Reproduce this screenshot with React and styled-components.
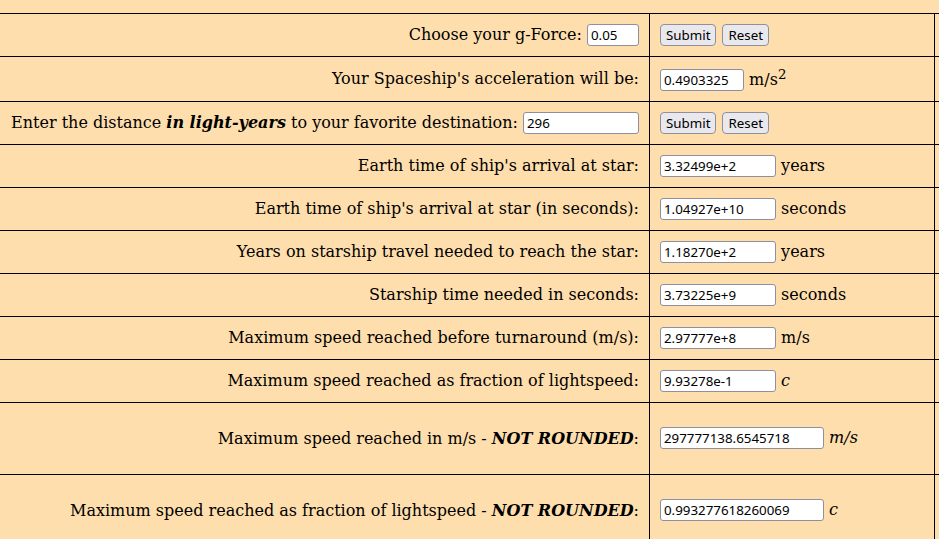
import React from 'react';
import styled, { createGlobalStyle } from 'styled-components';

const Global = createGlobalStyle`
  html, body { margin: 0; padding: 0; background: #ffdead; overflow: hidden; }
  body { font-family: "DejaVu Serif", serif; font-size: 16px; color: #000; }
`;

const Page = styled.div`
  padding-top: 13px;
  width: 939px;
  overflow: hidden;
`;

const Table = styled.div`
  width: 1100px;
  border-top: 1px solid #000;
`;

const Row = styled.div`
  display: grid;
  grid-template-columns: 650px 285px 1fr;
  height: ${(p) => p.$h || 43}px;
  box-sizing: border-box;
  border-bottom: 1px solid #000;
`;

const Cell = styled.div`
  box-sizing: border-box;
  border-right: ${(p) => (p.$last ? 'none' : '1px solid #000')};
  padding: 0 10px 1px;
  display: flex;
  align-items: center;
  justify-content: ${(p) => (p.$right ? 'flex-end' : 'flex-start')};
  white-space: nowrap;
`;

const Label = styled.span`
  text-align: right;
`;

const Field = styled.input`
  box-sizing: border-box;
  width: ${(p) => p.$w}px;
  height: 22px;
  padding: 1px 3px;
  border: 1px solid #8f8f9d;
  border-radius: 3px;
  background: #fff;
  font-family: "Noto Sans", sans-serif;
  font-size: 13.33px;
  color: #000;
  vertical-align: baseline;
`;

const Buttons = styled.div`
  display: flex;
  gap: 6px;
`;

const Button = styled.button`
  box-sizing: border-box;
  height: 22px;
  padding: 0 5px;
  border: 1px solid #8f8f9d;
  border-radius: 4px;
  background: #e9e9ed;
  font-family: "Noto Sans", sans-serif;
  font-size: 13.33px;
  color: #000;
`;

const Unit = styled.span`
  font-style: ${(p) => (p.$it ? 'italic' : 'normal')};
`;

const Strong = styled.b`
  font-style: italic;
  font-weight: bold;
`;

const ValueCell = ({ w, value, unit, it }) => (
  <Cell>
    <Label>
      <Field $w={w} defaultValue={value} readOnly /> <Unit $it={it}>{unit}</Unit>
    </Label>
  </Cell>
);

const rows = [
  ['Earth time of ship\'s arrival at star:', '3.32499e+2', 'years'],
  ['Earth time of ship\'s arrival at star (in seconds):', '1.04927e+10', 'seconds'],
  ['Years on starship travel needed to reach the star:', '1.18270e+2', 'years'],
  ['Starship time needed in seconds:', '3.73225e+9', 'seconds'],
  ['Maximum speed reached before turnaround (m/s):', '2.97777e+8', 'm/s'],
  ['Maximum speed reached as fraction of lightspeed:', '9.93278e-1', 'c', true],
];

export default function App() {
  return (
    <Page>
      <Global />
      <Table>
        <Row>
          <Cell $right>
            <Label>
              Choose your g-Force: <Field $w={52} defaultValue="0.05" />
            </Label>
          </Cell>
          <Cell>
            <Buttons>
              <Button>Submit</Button>
              <Button>Reset</Button>
            </Buttons>
          </Cell>
          <Cell $last />
        </Row>
        <Row $h={45}>
          <Cell $right>
            <Label>Your Spaceship's acceleration will be:</Label>
          </Cell>
          <ValueCell w={84} value="0.4903325" unit={<>m/s<sup>2</sup></>} />
          <Cell $last />
        </Row>
        <Row>
          <Cell $right>
            <Label>
              Enter the distance <Strong>in light-years</Strong> to your favorite destination:{' '}
              <Field $w={116} defaultValue="296" />
            </Label>
          </Cell>
          <Cell>
            <Buttons>
              <Button>Submit</Button>
              <Button>Reset</Button>
            </Buttons>
          </Cell>
          <Cell $last />
        </Row>
        {rows.map(([label, value, unit, it]) => (
          <Row key={label}>
            <Cell $right>
              <Label>{label}</Label>
            </Cell>
            <ValueCell w={116} value={value} unit={unit} it={it} />
            <Cell $last />
          </Row>
        ))}
        <Row $h={72}>
          <Cell $right>
            <Label>
              Maximum speed reached in m/s - <Strong>NOT ROUNDED</Strong>:
            </Label>
          </Cell>
          <ValueCell w={164} value="297777138.6545718" unit="m/s" it />
          <Cell $last />
        </Row>
        <Row $h={72}>
          <Cell $right>
            <Label>
              Maximum speed reached as fraction of lightspeed - <Strong>NOT ROUNDED</Strong>:
            </Label>
          </Cell>
          <ValueCell w={164} value="0.993277618260069" unit="c" it />
          <Cell $last />
        </Row>
      </Table>
    </Page>
  );
}
